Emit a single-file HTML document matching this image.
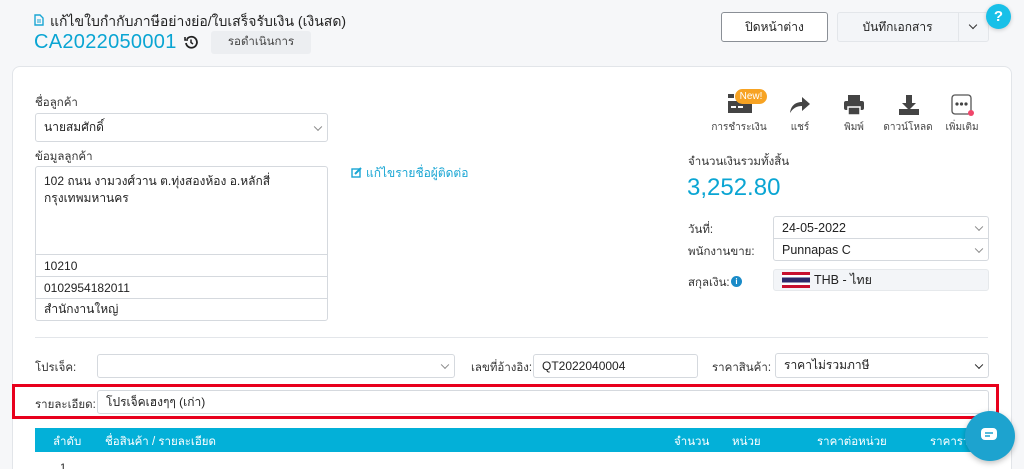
<!DOCTYPE html>
<html style="width:1024px;height:469px;overflow:hidden"><head><meta charset="utf-8"><style>
*{box-sizing:border-box;margin:0;padding:0}
body{width:1024px;height:469px;overflow:hidden;background:#f6f7f9;font-family:"Liberation Sans","Noto Sans CJK SC",sans-serif;font-size:12px;color:#222;position:relative}
.a{position:absolute}
.inp{position:absolute;background:#fff;border:1px solid #d5d9de;border-radius:3px;padding:0 8px;display:flex;align-items:center;font-size:12px;color:#222}
.chev{position:absolute;right:6px;top:50%;width:6px;height:6px;border-right:1.2px solid #888;border-bottom:1.2px solid #888;transform:translateY(-70%) rotate(45deg)}
.lbl{position:absolute;font-size:11.5px;color:#333}
.ic{position:absolute;text-align:center;width:60px;font-size:10px;color:#444}
</style></head><body>
<svg class="a" style="left:34px;top:14px" width="10" height="12"><path d="M1 1h5l3 3v7H1z" fill="none" stroke="#1aa6d4" stroke-width="1.4"/><path d="M3 6h4M3 8h4" stroke="#1aa6d4"/></svg>
<div class="a" style="left:50px;top:11px;font-size:14px;color:#222">แก้ไขใบกำกับภาษีอย่างย่อ/ใบเสร็จรับเงิน (เงินสด)</div>
<div class="a" style="left:34px;top:31px;font-size:20px;color:#0aa5d3;letter-spacing:0.3px">CA2022050001</div>
<svg class="a" style="left:184px;top:35px" width="14" height="14"><path d="M3 4A5.5 5.5 0 1 1 2 8" fill="none" stroke="#222" stroke-width="1.8"/><path d="M1 2v3h3" fill="none" stroke="#222" stroke-width="1.6"/><path d="M7 4.5v3l2 1.5" fill="none" stroke="#222" stroke-width="1.5"/></svg>
<div class="a" style="left:211px;top:31px;width:100px;height:23px;background:#eceef1;border-radius:3px;font-size:11.5px;color:#444;text-align:center;line-height:23px">รอดำเนินการ</div>
<div class="a" style="left:721px;top:12px;width:107px;height:30px;border:1px solid #8a8f96;border-radius:3px;background:#fff;text-align:center;line-height:28px;font-size:12px">ปิดหน้าต่าง</div>
<div class="a" style="left:837px;top:12px;width:152px;height:30px;border:1px solid #e3e6ea;border-radius:3px;background:#f3f5f8"></div>
<div class="a" style="left:837px;top:12px;width:122px;height:30px;text-align:center;line-height:30px;font-size:12px;border-right:1px solid #e3e6ea">บันทึกเอกสาร</div>
<div class="a" style="left:970px;top:22px;width:6px;height:6px;border-right:1.8px solid #333;border-bottom:1.8px solid #333;transform:rotate(45deg)"></div>
<div class="a" style="left:986px;top:4px;width:25px;height:25px;border-radius:50%;background:#18c0e8;color:#fff;font-weight:bold;text-align:center;line-height:25px;font-size:15px;box-shadow:0 1px 4px rgba(0,0,0,.2)">?</div>

<div class="a" style="left:12px;top:66px;width:1000px;height:403px;background:#fff;border:1px solid #e2e5e9;border-bottom:none;border-radius:8px 8px 0 0"></div>

<div class="lbl" style="left:35px;top:94px">ชื่อลูกค้า</div>
<div class="inp" style="left:35px;top:113px;width:293px;height:29px">นายสมศักดิ์<span class="chev"></span></div>
<div class="lbl" style="left:35px;top:148px">ข้อมูลลูกค้า</div>
<div class="inp" style="left:35px;top:166px;width:293px;height:89px;align-items:flex-start;padding-top:6px;line-height:17px;border-radius:3px 3px 0 0">102 ถนน งามวงศ์วาน ต.ทุ่งสองห้อง อ.หลักสี่<br>กรุงเทพมหานคร</div>
<div class="inp" style="left:35px;top:254px;width:293px;height:23px;border-radius:0">10210</div>
<div class="inp" style="left:35px;top:276px;width:293px;height:23px;border-radius:0">0102954182011</div>
<div class="inp" style="left:35px;top:298px;width:293px;height:23px;border-radius:0 0 3px 3px">สำนักงานใหญ่</div>
<svg class="a" style="left:351px;top:167px" width="11" height="11"><rect x="1" y="2" width="8" height="8" fill="none" stroke="#1aa6d4" stroke-width="1.4"/><path d="M4 7l6-6" stroke="#1aa6d4" stroke-width="2"/></svg>
<div class="a" style="left:366px;top:164px;font-size:12px;color:#1aa6d4">แก้ไขรายชื่อผู้ติดต่อ</div>

<svg class="a" style="left:727px;top:94px" width="26" height="22"><rect x="1" y="0" width="6" height="4" fill="#444"/><rect x="1" y="7" width="24" height="12" fill="#444"/><rect x="4" y="12" width="5" height="2" fill="#fff"/><rect x="11" y="12" width="5" height="2" fill="#fff"/></svg>
<div class="a" style="left:735px;top:89px;width:32px;height:15px;background:#f7a323;border-radius:8px;color:#fff;font-size:10px;text-align:center;line-height:15px">New!</div>
<div class="ic" style="left:709px;top:120px">การชำระเงิน</div>
<svg class="a" style="left:789px;top:96px" width="22" height="18"><path d="M1 17C2 9 7 6 13 6V1l8 7-8 7V10C8 10 4 12 1 17z" fill="#444"/></svg>
<div class="ic" style="left:770px;top:120px">แชร์</div>
<svg class="a" style="left:843px;top:94px" width="22" height="22"><rect x="5" y="1" width="12" height="6" fill="#444"/><rect x="1" y="7" width="20" height="9" rx="2" fill="#444"/><rect x="5" y="13" width="12" height="8" fill="#444" stroke="#fff" stroke-width="1.5"/></svg>
<div class="ic" style="left:824px;top:120px">พิมพ์</div>
<svg class="a" style="left:898px;top:94px" width="22" height="22"><path d="M8 1h6v8h4l-7 7-7-7h4z" fill="#444"/><path d="M1 15v6h20v-6" fill="#444"/></svg>
<div class="ic" style="left:878px;top:120px">ดาวน์โหลด</div>
<svg class="a" style="left:951px;top:94px" width="24" height="24"><rect x="1" y="1" width="19" height="19" rx="3" fill="none" stroke="#555" stroke-width="1.3"/><circle cx="6" cy="10" r="1.6" fill="#444"/><circle cx="10.5" cy="10" r="1.6" fill="#444"/><circle cx="15" cy="10" r="1.6" fill="#444"/><circle cx="20" cy="19" r="3" fill="#f0466a"/></svg>
<div class="ic" style="left:932px;top:120px">เพิ่มเติม</div>

<div class="lbl" style="left:688px;top:153px">จำนวนเงินรวมทั้งสิ้น</div>
<div class="a" style="left:687px;top:174px;font-size:24px;color:#0aa5d3">3,252.80</div>
<div class="lbl" style="left:688px;top:221px">วันที่:</div>
<div class="lbl" style="left:688px;top:243px">พนักงานขาย:</div>
<div class="inp" style="left:773px;top:216px;width:216px;height:23px;border-radius:3px 3px 0 0;font-size:12.5px">24-05-2022<span class="chev"></span></div>
<div class="inp" style="left:773px;top:238px;width:216px;height:23px;border-radius:0 0 3px 3px;font-size:12.5px">Punnapas C<span class="chev"></span></div>
<div class="lbl" style="left:688px;top:274px">สกุลเงิน:</div>
<div class="a" style="left:731px;top:276px;width:11px;height:11px;border-radius:50%;background:#1a8bc8;color:#fff;font-size:8px;font-weight:bold;text-align:center;line-height:11px">i</div>
<div class="inp" style="left:773px;top:269px;width:216px;height:22px;background:#f3f5f8;border-color:#e6e9ec;font-size:12.5px;padding-left:8px">
<svg width="28" height="16" style="margin-right:4px"><rect width="28" height="16" fill="#c8102e"/><rect y="3" width="28" height="10" fill="#fff"/><rect y="5.5" width="28" height="5" fill="#2d2a6b"/></svg>THB - ไทย</div>

<div class="a" style="left:35px;top:337px;width:953px;height:1px;background:#e3e6ea"></div>

<div class="lbl" style="left:35px;top:359px">โปรเจ็ค:</div>
<div class="inp" style="left:97px;top:354px;width:358px;height:24px"><span class="chev"></span></div>
<div class="lbl" style="left:471px;top:359px">เลขที่อ้างอิง:</div>
<div class="inp" style="left:533px;top:354px;width:165px;height:24px">QT2022040004</div>
<div class="lbl" style="left:712px;top:359px">ราคาสินค้า:</div>
<div class="inp" style="left:775px;top:353px;width:214px;height:25px">ราคาไม่รวมภาษี<span class="chev" style="border-color:#222;border-width:1.8px"></span></div>

<div class="a" style="left:12px;top:384px;width:987px;height:35px;border:3px solid #e8001c"></div>
<div class="lbl" style="left:35px;top:396px">รายละเอียด:</div>
<div class="inp" style="left:97px;top:390px;width:892px;height:24px">โปรเจ็คเฮงๆๆ (เก่า)</div>

<div class="a" style="left:35px;top:428px;width:970px;height:24px;background:#03b0d8;color:#fff;font-size:11.5px">
<span class="a" style="left:18px;top:5px">ลำดับ</span>
<span class="a" style="left:70px;top:5px">ชื่อสินค้า / รายละเอียด</span>
<span class="a" style="left:639px;top:5px">จำนวน</span>
<span class="a" style="left:697px;top:5px">หน่วย</span>
<span class="a" style="left:782px;top:5px">ราคาต่อหน่วย</span>
<span class="a" style="left:895px;top:5px">ราคารวม</span>
</div>
<div class="a" style="left:60px;top:462px;font-size:11px">1</div>
<div class="a" style="left:965px;top:411px;width:50px;height:50px;border-radius:50%;background:#1da3cf;box-shadow:0 2px 6px rgba(0,0,0,.25)"></div>
<svg class="a" style="left:980px;top:427px" width="18" height="15"><rect x="1" y="1" width="16" height="12" rx="4" fill="#fff"/><path d="M5 6h8M5 9h5" stroke="#1da3cf" stroke-width="1.5"/></svg>
</body></html>
